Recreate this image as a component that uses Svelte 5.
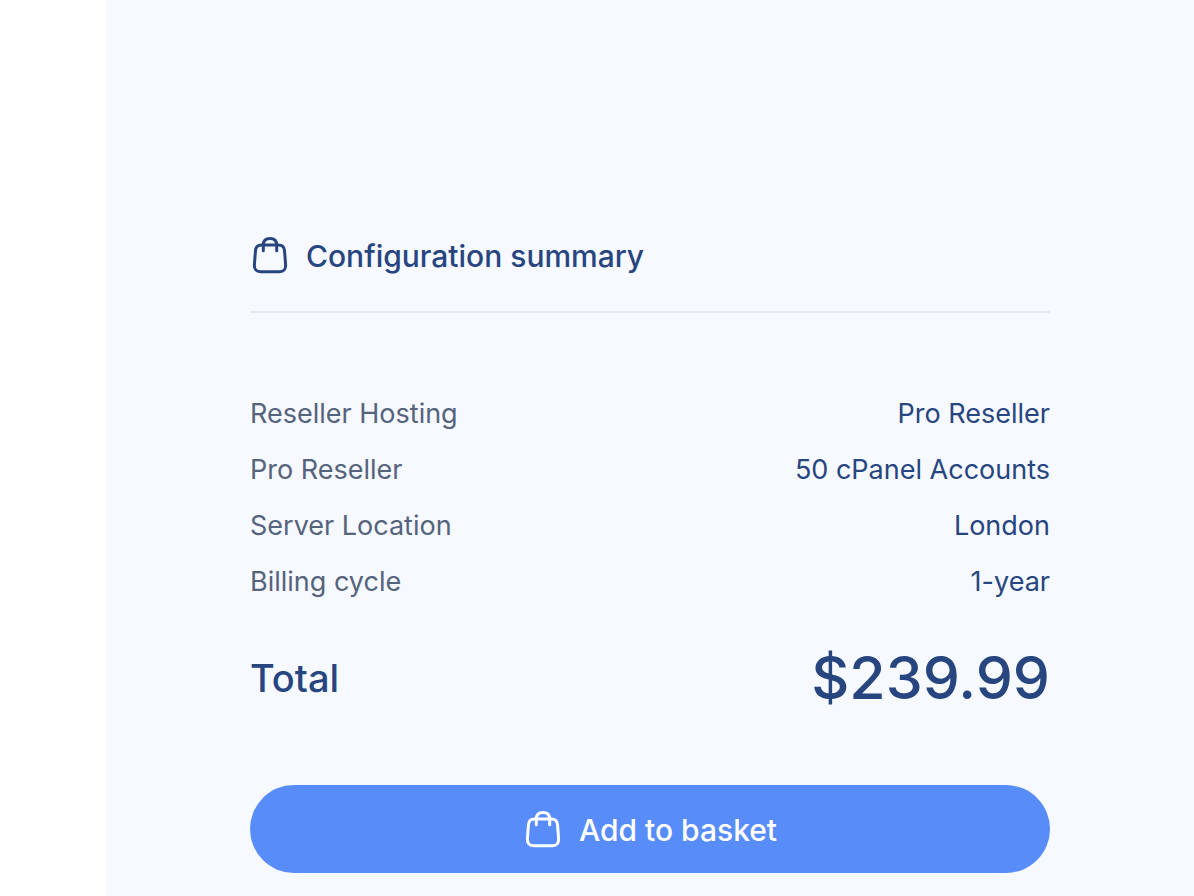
<script lang="ts">
  const rows = [
    { label: 'Reseller Hosting', value: 'Pro Reseller' },
    { label: 'Pro Reseller', value: '50 cPanel Accounts' },
    { label: 'Server Location', value: 'London' },
    { label: 'Billing cycle', value: '1-year' }
  ];

  const total = '$239.99';
</script>

{#snippet bag()}
  <svg class="bag" viewBox="0 0 40 40" aria-hidden="true">
    <path d="M11.500 9H28.500C32.500 9 34.200 11 34.500 14.500L35.600 28.500C35.900 33.200 33.800 35.800 29.500 35.800H10.500C6.200 35.800 4.100 33.200 4.400 28.500L5.500 14.500C5.800 11 7.500 9 11.500 9Z" />
    <path d="M13.300 14.800V9.300C13.300 4.900 16 2.600 20 2.600S26.700 4.900 26.700 9.300V14.800" />
  </svg>
{/snippet}

<main class="page">
  <section class="summary" aria-labelledby="summary-title">
    <h2 class="title" id="summary-title">
      {@render bag()}
      Configuration summary
    </h2>

    <dl class="rows">
      {#each rows as row}
        <div class="row">
          <dt>{row.label}</dt>
          <dd>{row.value}</dd>
        </div>
      {/each}
    </dl>

    <div class="total">
      <span class="total-label">Total</span>
      <strong class="price">{total}</strong>
    </div>

    <button type="button" class="basket">
      {@render bag()}
      Add to basket
    </button>
  </section>
</main>

<style>
  :global(body) {
    background: #fff;
  }

  .page {
    min-height: 100vh;
    box-sizing: border-box;
    margin-left: 106px;
    padding: 232px 144px 23px;
    background: #f6f9ff;
    color: #27457f;
    font-family: Inter, 'Liberation Sans', sans-serif;
  }

  .title {
    display: flex;
    align-items: center;
    gap: 16px;
    margin: 0;
    padding-bottom: 31px;
    border-bottom: 2px solid #e5e8f5;
    font-size: 30px;
    font-weight: 500;
    line-height: 48px;
  }

  .bag {
    flex: none;
    width: 40px;
    height: 40px;
    fill: none;
    stroke: currentColor;
    stroke-width: 3;
    stroke-linecap: round;
    stroke-linejoin: round;
  }

  .rows {
    margin: 73px 0 0;
  }

  .row {
    display: flex;
    justify-content: space-between;
    font-size: 27px;
    line-height: 56px;
  }

  dt {
    color: #55637c;
  }

  dd {
    margin: 0;
  }

  .total {
    display: flex;
    align-items: center;
    justify-content: space-between;
    margin-top: 32px;
    font-weight: 500;
    line-height: 72px;
  }

  .total-label {
    font-size: 38px;
  }

  .price {
    font-size: 59px;
    font-weight: 500;
  }

  .basket {
    display: flex;
    align-items: center;
    justify-content: center;
    gap: 16px;
    width: 100%;
    margin-top: 71px;
    padding: 21px 0 19px;
    border: none;
    border-radius: 44px;
    background: #588cf9;
    color: #fff;
    font: inherit;
    font-size: 30px;
    font-weight: 500;
    line-height: 48px;
    cursor: pointer;
  }
</style>
